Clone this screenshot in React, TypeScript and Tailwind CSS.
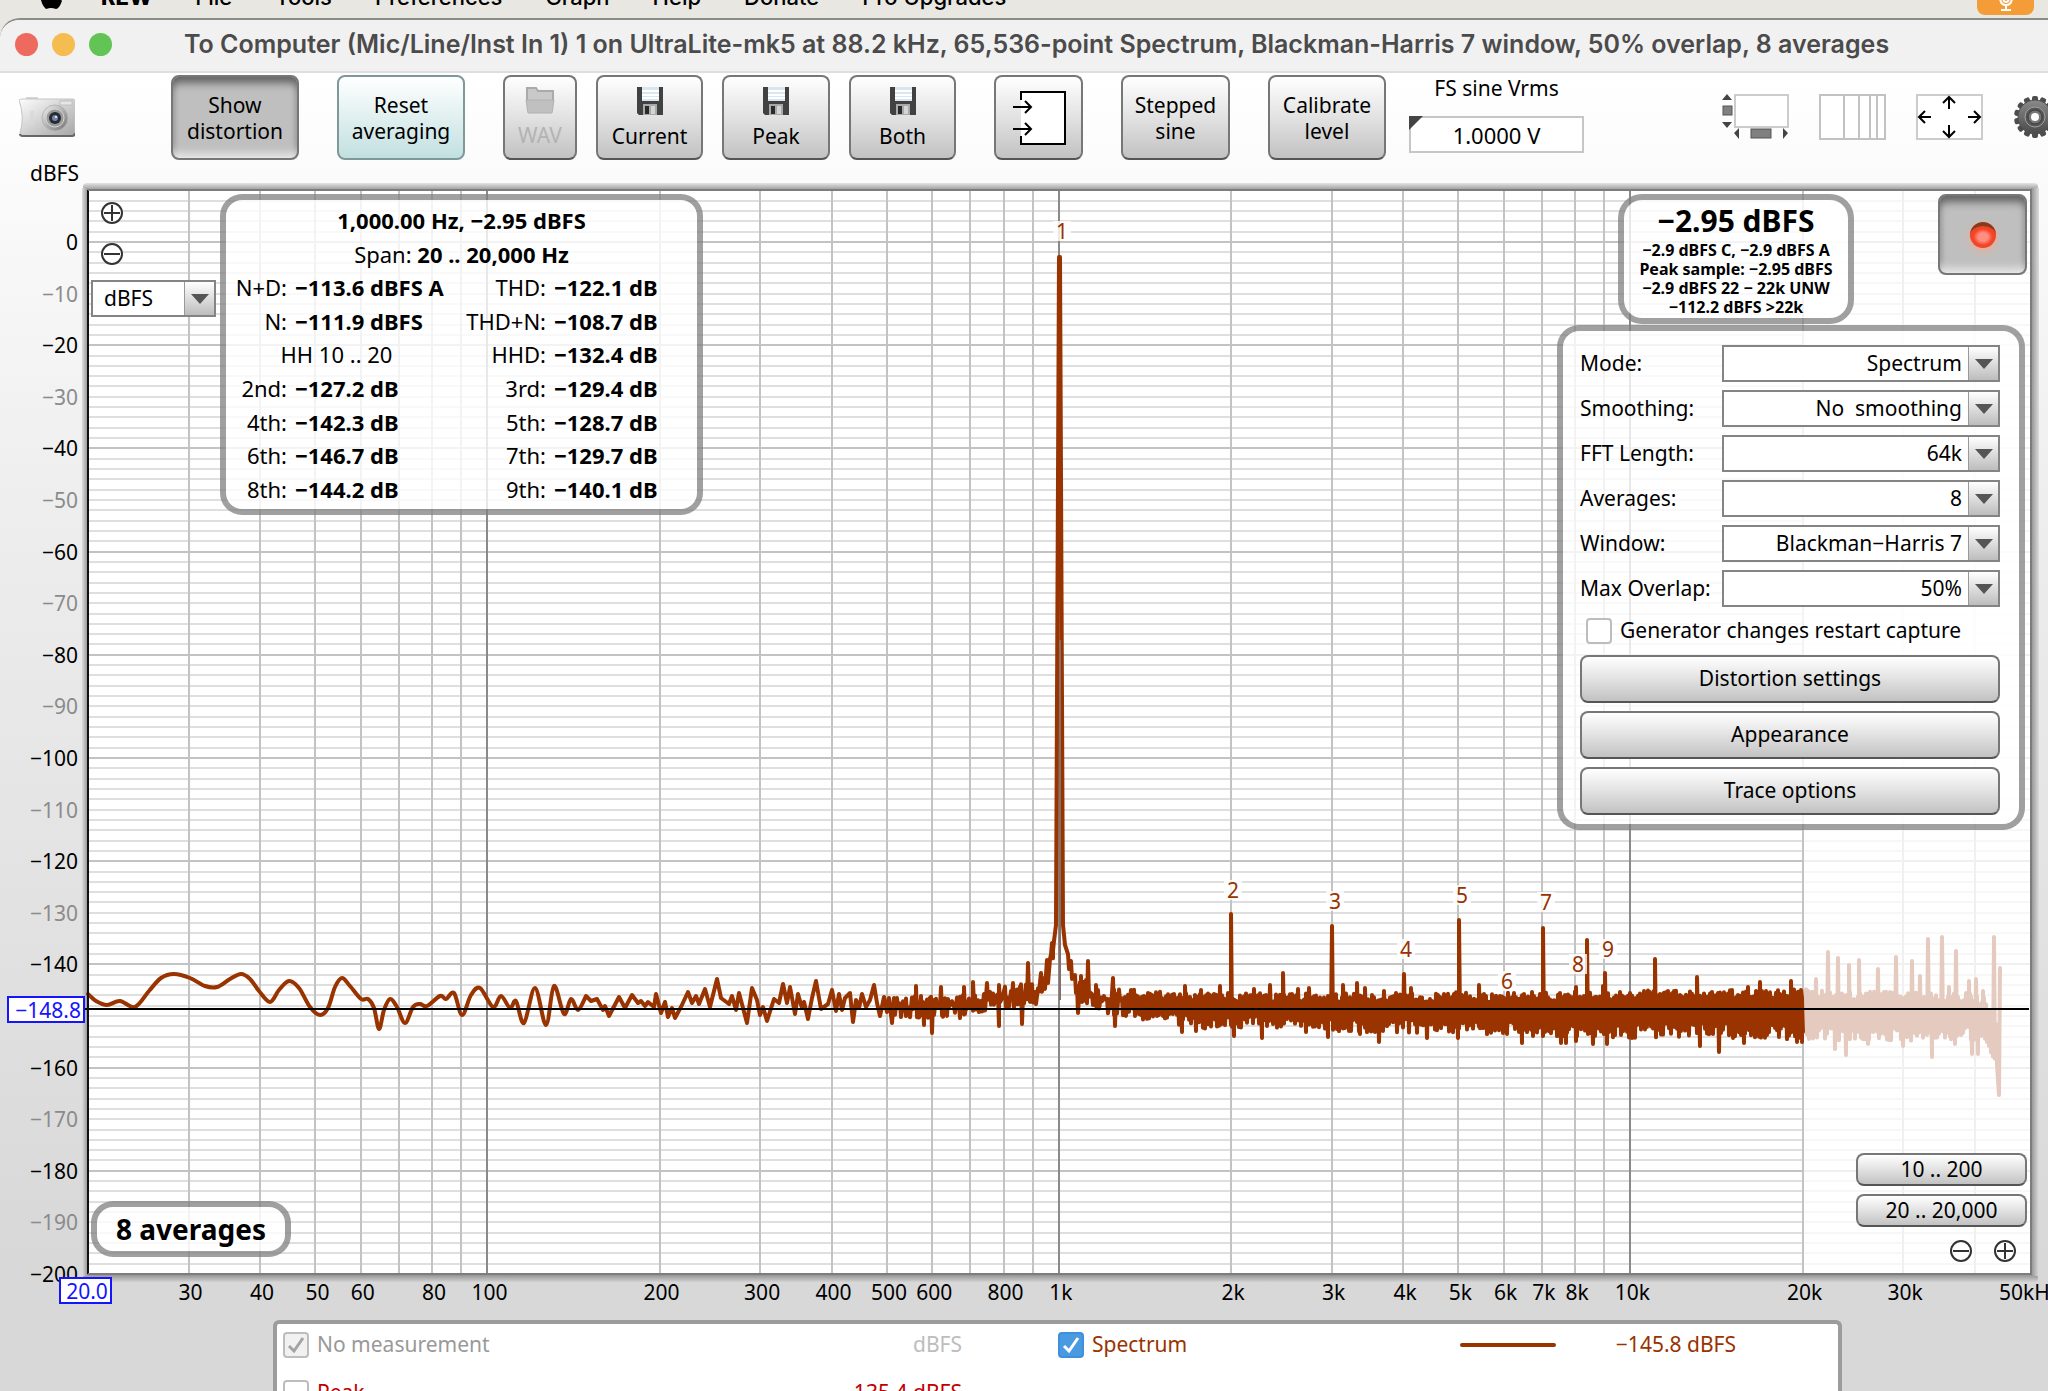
import React from "react";

const TRACE = "#993300";

/* Plot area geometry, in chart units */
const LEFT = 88;
const RIGHT = 2031;
const TOP = 190;
const BOTTOM = 1274;
const xOf = (hz: number) => LEFT + 571.5 * Math.log10(hz / 20);
const yOf = (db: number) => 242 - db * 5.16;

const FREQS = [30, 40, 50, 60, 70, 80, 90].concat(
  [100, 200, 300, 400, 500, 600, 700, 800, 900],
  [1000, 2000, 3000, 4000, 5000, 6000, 7000, 8000, 9000],
  [10000, 20000, 30000, 40000],
);

const X_LABELS: [number, string][] = [
  [30, "30"], [40, "40"], [50, "50"], [60, "60"], [80, "80"], [100, "100"], [200, "200"], [300, "300"],
  [400, "400"], [500, "500"], [600, "600"], [800, "800"], [1000, "1k"], [2000, "2k"], [3000, "3k"],
  [4000, "4k"], [5000, "5k"], [6000, "6k"], [7000, "7k"], [8000, "8k"], [10000, "10k"], [20000, "20k"], [30000, "30k"],
];

const HARMONICS: [number, number, string][] = [
  [1062, 231, "1"], [1233, 890, "2"], [1335, 901, "3"], [1406, 949, "4"], [1462, 895, "5"],
  [1507, 981, "6"], [1546, 902, "7"], [1578, 964, "8"], [1608, 949, "9"],
];

/* Low-frequency part of the trace */
const SMOOTH: number[][] = [
  [88, 994], [96, 1001], [107, 1005], [120, 1001], [135, 1007], [149, 991], [161, 978], [174, 974], [190, 978],
  [205, 986], [217, 987], [230, 979], [241, 974], [250, 979], [259, 991], [270, 1002], [279, 990], [289, 981],
  [299, 988], [310, 1007], [320, 1015], [328, 1008], [335, 987], [342, 978], [350, 986], [361, 999], [368, 999],
  [374, 1008], [379, 1029], [384, 1010], [390, 999], [397, 1007], [405, 1023], [413, 1007], [420, 1004],
  [427, 1006], [440, 996], [446, 999], [454, 993], [462, 1015], [471, 995], [480, 988], [493, 1007], [501, 996],
  [510, 1008], [516, 1001], [524, 1023], [535, 988], [546, 1025], [554, 986], [564, 1014], [571, 999], [578, 1010],
  [586, 996],
];
const ROUGH: number[][] = [
  [591, 1001], [597, 999], [603, 1010], [605, 1006], [609, 1016], [619, 997], [625, 1008], [632, 995], [638, 1003],
  [641, 1001], [645, 1006], [648, 1002], [654, 1007], [656, 994], [661, 1013], [665, 1002], [668, 1017], [672, 1008],
  [675, 1018], [681, 1007], [688, 992], [692, 1003], [696, 996], [699, 1004], [705, 989], [710, 1007], [717, 979],
  [721, 998], [729, 1004], [732, 996], [736, 1010], [739, 993], [743, 1008], [747, 1023], [752, 988], [757, 1000],
  [760, 1015], [763, 1007], [767, 1021], [774, 999], [779, 1003], [783, 984], [787, 1003], [790, 987], [795, 1014],
  [798, 994], [802, 1008], [804, 1002], [808, 1019], [812, 998], [816, 981], [821, 1009], [828, 1004], [832, 990],
  [836, 1011], [839, 994], [842, 1010], [845, 998], [850, 993], [853, 1022], [856, 1000], [859, 1008], [862, 994],
  [866, 1007], [870, 1000], [874, 985], [877, 1003], [880, 1016], [884, 997], [887, 1012], [889, 998], [892, 1023],
];

/* Envelope of the noise floor: x, upper edge, lower edge */
const ENVELOPE: number[][] = [
  [892, 998, 1017], [930, 994, 1018], [960, 993, 1015], [985, 989, 1011], [1018, 985, 1008], [1036, 980, 1004],
  [1046, 976, 1002], [1050, 955, 966], [1054, 945, 952], [1064, 946, 958], [1070, 958, 975], [1076, 974, 1000],
  [1090, 980, 1006], [1102, 988, 1013], [1130, 989, 1018], [1165, 992, 1024], [1200, 993, 1029], [1260, 993, 1027],
  [1330, 993, 1031], [1380, 993, 1033], [1450, 992, 1033], [1550, 992, 1037], [1600, 991, 1039], [1700, 990, 1037],
  [1803, 989, 1040], [1900, 992, 1041], [1975, 993, 1040], [1984, 997, 1044], [1990, 1006, 1056], [1998, 1030, 1068],
];
const UP: number[][] = [
  [916, 986], [941, 987], [964, 987], [973, 982], [987, 983], [999, 985], [1013, 983], [1028, 963], [1041, 973],
  [1047, 960], [1052, 943], [1071, 961], [1075, 975], [1081, 976], [1088, 961], [1096, 985], [1113, 978],
  [1131, 990], [1185, 986], [1201, 990], [1220, 986], [1231, 914], [1254, 989], [1270, 985], [1283, 973],
  [1298, 989], [1309, 988], [1332, 926], [1343, 985], [1357, 983], [1365, 988], [1384, 991], [1404, 974],
  [1411, 988], [1459, 920], [1479, 985], [1543, 928], [1576, 987], [1587, 940], [1605, 973], [1603, 986],
  [1655, 959], [1697, 977], [1748, 987], [1760, 982], [1791, 981], [1801, 990], [1816, 979], [1828, 952],
  [1838, 958], [1849, 965], [1859, 960], [1878, 969], [1896, 957], [1912, 961], [1920, 976], [1928, 939],
  [1942, 937], [1949, 987], [1956, 951], [1969, 981], [1976, 979], [1983, 991], [1994, 937],
];
const DOWN: number[][] = [
  [905, 1016], [923, 1025], [931, 1033], [946, 1016], [959, 1018], [998, 1026], [1021, 1024], [1077, 1013],
  [1114, 1026], [1181, 1032], [1195, 1031], [1233, 1036], [1261, 1038], [1305, 1032], [1327, 1037], [1359, 1034],
  [1378, 1042], [1426, 1038], [1457, 1038], [1521, 1043], [1560, 1043], [1565, 1043], [1575, 1041], [1592, 1044],
  [1606, 1044], [1631, 1038], [1699, 1046], [1718, 1052], [1743, 1043], [1796, 1042], [1801, 1042], [1834, 1049],
  [1845, 1055], [1867, 1044], [1902, 1046], [1931, 1057], [1954, 1044], [1971, 1054], [1977, 1054],
];

function envelopeAt(x: number) {
  let i = 0;
  while (i < ENVELOPE.length - 2 && ENVELOPE[i + 1][0] < x) i++;
  const [x0, a0, b0] = ENVELOPE[i];
  const [x1, a1, b1] = ENVELOPE[i + 1];
  const t = (x - x0) / (x1 - x0);
  return [a0 + (a1 - a0) * t, b0 + (b1 - b0) * t];
}

function noise(from: number, to: number) {
  let seed = 7 + from;
  const rnd = () => {
    seed = (seed * 16807) % 2147483647;
    return seed / 2147483647;
  };
  const up = new Map(UP.map(([x, y]) => [x, y]));
  const down = new Map(DOWN.map(([x, y]) => [x, y]));
  let d = "";
  for (let x = from; x <= to; x++) {
    const dense = x > 1130;
    const spike = up.get(x);
    const dip = down.get(x);
    const [a, b] = envelopeAt(x);
    if (spike === undefined && dip === undefined && (dense ? x % 2 : x % 3)) continue;
    const r = rnd();
    const s = rnd();
    const hi = spike ?? a + (dense ? 10 * r : 13 * r);
    const lo = dip ?? b - (dense ? 15 * s : 16 * s * s);
    d += `L${x} ${hi.toFixed(1)}L${x + 1} ${lo.toFixed(1)}`;
  }
  return d;
}

function smooth(points: number[][]) {
  let d = `M${points[0][0]} ${points[0][1]}`;
  for (let i = 0; i < points.length - 1; i++) {
    const p0 = points[Math.max(0, i - 1)];
    const p1 = points[i];
    const p2 = points[i + 1];
    const p3 = points[Math.min(points.length - 1, i + 2)];
    d += `C${p1[0] + (p2[0] - p0[0]) / 6} ${p1[1] + (p2[1] - p0[1]) / 6} ${p2[0] - (p3[0] - p1[0]) / 6} ${p2[1] - (p3[1] - p1[1]) / 6} ${p2[0]} ${p2[1]}`;
  }
  return d;
}

const AUDIBLE =
  smooth(SMOOTH) +
  ROUGH.map(([x, y]) => `L${x} ${y}`).join("") +
  noise(893, 1054) +
  "L1056 925L1057 700L1059 257L1060 257L1062 700L1063 925L1065 945" +
  noise(1066, 1802);
const ULTRASONIC = "M1805 1000" + noise(1805, 1996) + "L1997 1065L1999 1095L2000 968";

function Chart() {
  const rows: number[] = [];
  for (let db = 8; db > -200; db -= 2) rows.push(db);
  const labels: number[] = [];
  for (let db = 0; db >= -200; db -= 10) labels.push(db);
  return (
    <svg viewBox="0 160 2048 1160" className="block w-full" fontSize="21" role="img" aria-label="Spectrum level against frequency">
      <defs>
        <linearGradient id="edgeTop" x1="0" y1="0" x2="0" y2="1">
          <stop offset="0" stopColor="#e4e4e4" />
          <stop offset="1" stopColor="#999" />
        </linearGradient>
        <linearGradient id="edgeBottom" x1="0" y1="0" x2="0" y2="1">
          <stop offset="0" stopColor="#8c8c8c" />
          <stop offset="1" stopColor="#d2d2d2" />
        </linearGradient>
        <linearGradient id="edgeRight" x1="0" y1="0" x2="1" y2="0">
          <stop offset="0" stopColor="#909090" />
          <stop offset="1" stopColor="#dcdcdc" />
        </linearGradient>
        <linearGradient id="edgeLeft" x1="0" y1="0" x2="1" y2="0">
          <stop offset="0" stopColor="#dcdcdc" />
          <stop offset="1" stopColor="#909090" />
        </linearGradient>
      </defs>
      <text x="79" y="181" textAnchor="end">dBFS</text>
      <rect x="83" y="183" width="1955" height="7" rx="4" fill="url(#edgeTop)" />
      <rect x="83" y="1274" width="1955" height="8" rx="4" fill="url(#edgeBottom)" />
      <rect x="82" y="188" width="6" height="1088" fill="url(#edgeLeft)" />
      <rect x="2031" y="188" width="8" height="1088" fill="url(#edgeRight)" />
      <rect x={LEFT} y={TOP} width={RIGHT - LEFT} height={BOTTOM - TOP} fill="#fff" />
      {rows.map((db) => (
        <rect key={db} x={LEFT} y={Math.round(yOf(db)) - 1} width={RIGHT - LEFT} height={2} fill={db % 20 === 0 ? "#c3c3c3" : "#dfdfdf"} />
      ))}
      {FREQS.map((hz) => (
        <rect key={hz} x={Math.round(xOf(hz)) - 1} y={TOP} width={2} height={BOTTOM - TOP} fill={[100, 1000, 10000].includes(hz) ? "#8a8a8a" : "#c3c3c3"} />
      ))}
      <g stroke={TRACE} strokeWidth="4" fill="none" strokeLinejoin="round" strokeLinecap="round">
        <path d={ULTRASONIC} />
        <rect x="1804" y={TOP} width={RIGHT - 1804} height={BOTTOM - TOP} fill="#fff" fillOpacity="0.75" stroke="none" />
        <path d={AUDIBLE} />
      </g>
      <path d="M1060 640V1000" stroke="#857068" strokeWidth="2" />
      <path d={`M84 1009H${RIGHT - 2}`} stroke="#000" strokeWidth="2" />
      <path d={`M${LEFT} ${TOP}V${BOTTOM}`} stroke="#111" strokeWidth="2" />
      <path d={`M${LEFT} ${TOP}H${RIGHT}V${BOTTOM}H${LEFT}`} stroke="#7d7d7d" strokeWidth="2" fill="none" />
      {HARMONICS.map(([x, y, n]) => (
        <g key={n}>
          <rect x={x - 9} y={y - 10} width="18" height="20" fill="#fff" fillOpacity="0.8" />
          <text x={x} y={y + 8} textAnchor="middle" fill={TRACE}>{n}</text>
        </g>
      ))}
      {labels.filter((db) => db !== -150).map((db) => (
        <text key={db} x="78" y={yOf(db) + 8} textAnchor="end" fill={db % 20 === 0 ? "#000" : "#8b8b8b"}>
          {db === 0 ? "0" : `−${-db}`}
        </text>
      ))}
      <rect x="8" y="997" width="76" height="25" fill="#fff" stroke="#1414ff" strokeWidth="2" />
      <text x="81" y="1018" textAnchor="end" fill="#1414ff">−148.8</text>
      {X_LABELS.map(([hz, text]) => (
        <text key={text} x={xOf(hz) + 2} y="1300" textAnchor="middle">{text}</text>
      ))}
      <text x="1999" y="1300">50kHz</text>
      <rect x="60" y="1278" width="51" height="25" fill="#fff" stroke="#1414ff" strokeWidth="2" />
      <text x="87" y="1299" textAnchor="middle" fill="#1414ff">20.0</text>
    </svg>
  );
}

const GLOSS =
  "rounded-lg border-2 border-[#777] border-b-[#555] bg-linear-to-b from-white via-[#e2e2e2] to-[#c2c2c2] flex items-center justify-center";

function ToolButton({ className, children }: { className: string; children: React.ReactNode }) {
  return <button type="button" className={`${GLOSS} h-[85px] shrink-0 flex-col text-center leading-[26px] ${className}`}>{children}</button>;
}

function Floppy() {
  return (
    <svg width="26" height="28" viewBox="0 0 26 28" className="mb-2">
      <path d="M0 0H26V28H2L0 26Z" fill="#414141" />
      <rect x="5" y="0" width="17" height="14" fill="#d8e6f0" />
      <path d="M5 4H22M5 8H22M5 11H22" stroke="#fff" strokeWidth="2" />
      <rect x="6" y="17" width="14" height="11" fill="#a9a9a9" />
      <rect x="8" y="19" width="4" height="8" fill="#2b2b2b" />
      <rect x="14" y="19" width="4" height="8" fill="#d4d4d4" />
    </svg>
  );
}

function Folder() {
  return (
    <svg width="30" height="27" viewBox="0 0 30 27" className="mb-2">
      <path d="M2 14V1H11L13 4H28V14" fill="#c9c9c9" stroke="#aaa" strokeWidth="2" />
      <path d="M1 13H29L27 26H3Z" fill="#c0c0c0" stroke="#b0b0b0" />
    </svg>
  );
}

function Camera() {
  return (
    <svg width="56" height="40" viewBox="0 0 56 40">
      <defs>
        <linearGradient id="cam" x1="0" y1="0" x2="1" y2="1">
          <stop offset="0" stopColor="#fdfdfd" />
          <stop offset="1" stopColor="#a5a5a5" />
        </linearGradient>
        <linearGradient id="lens" x1="0" y1="0" x2="1" y2="1">
          <stop offset="0" stopColor="#f2f2f2" />
          <stop offset="1" stopColor="#6f6f6f" />
        </linearGradient>
      </defs>
      <rect x="7" y="0" width="12" height="4" fill="#d5d5d5" />
      <path d="M0 3Q1 2 4 2H54Q56 2 56 5V37Q56 39 53 39H3Q1 39 1 36Q6 20 0 3Z" fill="url(#cam)" stroke="#c4c4c4" />
      <path d="M1 37Q1 39 4 39H53Q56 39 56 36" stroke="#666" strokeWidth="2" fill="none" />
      <rect x="41" y="4" width="12" height="4" fill="#e6e6e6" stroke="#c0c0c0" />
      <path d="M13 14V28" stroke="#d8d8d8" strokeWidth="3" />
      <circle cx="36" cy="21" r="13" fill="url(#lens)" stroke="#b5b5b5" />
      <circle cx="36" cy="21" r="9" fill="#999" stroke="#d6d6d6" />
      <circle cx="36" cy="21" r="6" fill="#252a33" />
      <circle cx="36" cy="21" r="3" fill="#6f86a8" />
      <circle cx="37" cy="20" r="1" fill="#fff" />
    </svg>
  );
}

function Gear() {
  const teeth = Array.from({ length: 14 }, (_, i) => (i * 360) / 14);
  return (
    <svg width="44" height="44" viewBox="-22 -22 44 44">
      <defs>
        <linearGradient id="gear" x1="0" y1="0" x2="0" y2="1">
          <stop offset="0" stopColor="#8a8a8a" />
          <stop offset="1" stopColor="#4a4a4a" />
        </linearGradient>
      </defs>
      {teeth.map((a) => (
        <rect key={a} x="-3" y="-21" width="6" height="8" rx="2" fill="#4d4d4d" transform={`rotate(${a})`} />
      ))}
      <circle r="17" fill="url(#gear)" stroke="#4d4d4d" />
      <circle r="10" fill="#555" stroke="#a0a0a0" />
      <circle r="7" fill="#777" stroke="#3c3c3c" />
      <circle r="4" fill="#fff" />
    </svg>
  );
}

function ZoomButton({ plus, label }: { plus?: boolean; label: string }) {
  return (
    <button type="button" aria-label={label} className="block">
      <svg width="24" height="24" viewBox="0 0 24 24" fill="none" stroke="#333" strokeWidth="2">
        <circle cx="12" cy="12" r="10" fill="#fff" />
        <path d={plus ? "M4 12H20M12 4V20" : "M4 12H20"} />
      </svg>
    </button>
  );
}

function Drop({ id, value, right }: { id: string; value: string; right?: boolean }) {
  return (
    <div className="flex h-[37px] min-w-0 grow border-2 border-[#848484] bg-white">
      <select
        id={id}
        aria-label={right ? undefined : "Level unit"}
        className={`min-w-0 grow appearance-none bg-transparent outline-none ${right ? "pr-[6px] [text-align-last:right]" : "pl-[11px]"}`}
      >
        <option>{value}</option>
      </select>
      <span className="pointer-events-none flex w-[30px] shrink-0 items-center justify-center border-l border-[#999] bg-linear-to-b from-white to-[#bdbdbd]">
        <svg width="18" height="10" viewBox="0 0 18 10"><path d="M0 0H18L9 10Z" fill="#555" /></svg>
      </span>
    </div>
  );
}

const PANEL = "absolute border-[6px] border-[#808080]/75 bg-white/80 bg-clip-padding";
const PRESSED =
  "rounded-lg border-2 border-[#777] bg-[#bfbfbf] shadow-[inset_0_10px_8px_-4px_#666,inset_0_-8px_8px_-4px_#f5f5f5,inset_0_0_6px_#777] flex items-center justify-center";

const DISTORTION: string[][] = [
  ["N+D:", "−113.6 dBFS A", "THD:", "−122.1 dB"],
  ["N:", "−111.9 dBFS", "THD+N:", "−108.7 dB"],
  ["", "HH 10 .. 20", "HHD:", "−132.4 dB"],
  ["2nd:", "−127.2 dB", "3rd:", "−129.4 dB"],
  ["4th:", "−142.3 dB", "5th:", "−128.7 dB"],
  ["6th:", "−146.7 dB", "7th:", "−129.7 dB"],
  ["8th:", "−144.2 dB", "9th:", "−140.1 dB"],
];

function DistortionPanel() {
  return (
    <section className={`${PANEL} top-[34px] left-[220px] h-[321px] w-[483px] rounded-[22px] text-[22px] leading-[33px]`}>
      <p className="pt-1 text-center font-bold">1,000.00 Hz, −2.95 dBFS</p>
      <p className="pt-px text-center">Span: <b>20 .. 20,000 Hz</b></p>
      <table className="h-[235px] w-[440px] table-fixed border-collapse whitespace-nowrap">
        <colgroup>
          <col className="w-[61px]" /><col className="w-[152px]" /><col className="w-[107px]" /><col />
        </colgroup>
        <tbody>
          {DISTORTION.map(([a, b, c, d]) => (
            <tr key={c}>
              {a ? (
                <>
                  <th className="p-0 text-right font-normal">{a}</th>
                  <td className="p-0 pl-2 font-bold">{b}</td>
                </>
              ) : (
                <th colSpan={2} className="p-0 pl-2 text-center font-normal">{b}</th>
              )}
              <th className="p-0 text-right font-normal">{c}</th>
              <td className="p-0 pl-2 font-bold">{d}</td>
            </tr>
          ))}
        </tbody>
      </table>
    </section>
  );
}

const SETTINGS: [string, string, string][] = [
  ["mode", "Mode:", "Spectrum"],
  ["smoothing", "Smoothing:", "No\u00a0\u00a0smoothing"],
  ["fft", "FFT Length:", "64k"],
  ["averages", "Averages:", "8"],
  ["window", "Window:", "Blackman−Harris 7"],
  ["overlap", "Max Overlap:", "50%"],
];

function SettingsPanel() {
  return (
    <section className={`${PANEL} top-[165px] right-[23px] w-[468px] rounded-[22px] pt-[14px] pr-[19px] pb-[9px] pl-[17px]`}>
      <div className="flex flex-col gap-2">
        {SETTINGS.map(([id, label, value]) => (
          <div key={id} className="flex items-center">
            <label htmlFor={id} className="w-[142px] shrink-0 whitespace-nowrap">{label}</label>
            <Drop id={id} value={value} right />
          </div>
        ))}
      </div>
      <label className="my-[7px] flex h-[34px] items-center gap-2 pl-[6px] whitespace-nowrap">
        <input type="checkbox" className="h-[26px] w-[26px] shrink-0 appearance-none rounded-[4px] border-2 border-[#bdbdbd] bg-white" />
        Generator changes restart capture
      </label>
      <div className="flex flex-col gap-2">
        {["Distortion settings", "Appearance", "Trace options"].map((t) => (
          <button key={t} type="button" className={`${GLOSS} h-[48px] w-full`}>{t}</button>
        ))}
      </div>
    </section>
  );
}

function Check({ state, label }: { state: "off" | "on" | "disabled"; label: string }) {
  const look = state === "on" ? "border-[#3f8fdb] bg-[#4a9ae2]" : state === "disabled" ? "border-[#bdbdbd] bg-[#f1f1f1]" : "border-[#bdbdbd] bg-white";
  return (
    <label className="flex items-center gap-2 whitespace-nowrap">
      <span className="relative block h-[26px] w-[26px]">
        <input type="checkbox" defaultChecked={state !== "off"} disabled={state === "disabled"} className={`block h-[26px] w-[26px] appearance-none rounded-[4px] border-2 ${look}`} />
        {state !== "off" && (
          <svg viewBox="0 0 26 26" className="pointer-events-none absolute inset-0" fill="none" stroke={state === "on" ? "#fff" : "#a3a3a3"} strokeWidth="3">
            <path d="M6 14L11 19L20 6" />
          </svg>
        )}
      </span>
      {label}
    </label>
  );
}

export default function App() {
  return (
    <div className="flex h-screen flex-col overflow-hidden bg-[#e9e7e2] font-['Noto_Sans',sans-serif] text-[21px] text-black">
      <nav className="flex h-[18px] shrink-0 items-end overflow-hidden pb-[8px] pl-[38px] font-['Inter',sans-serif] text-[22px] leading-[26px] font-medium whitespace-nowrap">
        <svg width="26" height="26" viewBox="0 0 26 26" className="mr-[37px] shrink-0">
          <path d="M2 10Q2 4 8 4Q11 4 13 5Q16 4 18 4Q22 4 24 7Q19 11 24 17Q21 25 18 25Q15 24 13 24Q11 24 8 25Q3 21 2 10Z" />
        </svg>
        <div className="flex gap-[43px]">
          <a href="#rew" className="font-extrabold">REW</a>
          <a href="#file">File</a>
          <a href="#tools">Tools</a>
          <a href="#preferences">Preferences</a>
          <a href="#graph">Graph</a>
          <a href="#help">Help</a>
          <a href="#donate">Donate</a>
          <a href="#pro">Pro Upgrades</a>
        </div>
        <div className="mr-[14px] -mb-[5px] ml-auto flex h-[30px] w-[57px] shrink-0 items-end justify-center rounded-lg bg-[#f39c38] pb-1">
          <svg width="16" height="18" viewBox="0 0 16 18" fill="none" stroke="#fff" strokeWidth="2"><path d="M2 4Q2 12 8 12T14 4M8 12V17M3 17H13M5 4Q5 9 8 9T11 4" /></svg>
        </div>
      </nav>
      <main className="flex min-h-0 grow flex-col rounded-tl-[20px] border-t-2 border-[#8b8b89] bg-linear-to-b from-white from-4% via-[#eee] via-35% to-[#d8d8d8] to-90%">
        <header className="flex h-[53px] shrink-0 items-center rounded-tl-[20px] border-b-2 border-[#dedede] bg-[#f1f1f1] pb-[2px] pl-[15px]">
          <div className="flex gap-[14px]">
            <button type="button" aria-label="Close" className="h-[23px] w-[23px] rounded-full bg-[#ee6a5f]" />
            <button type="button" aria-label="Minimise" className="h-[23px] w-[23px] rounded-full bg-[#f5bd4f]" />
            <button type="button" aria-label="Zoom" className="h-[23px] w-[23px] rounded-full bg-[#61c454]" />
          </div>
          <h1 className="ml-[72px] font-['Inter',sans-serif] text-[25px] font-semibold whitespace-nowrap text-[#4b4b4b]">
            To Computer (Mic/Line/Inst In 1) 1 on UltraLite-mk5 at 88.2 kHz, 65,536-point Spectrum, Blackman-Harris 7 window, 50% overlap, 8 averages
          </h1>
        </header>
        <div className="flex h-[87px] shrink-0 items-start overflow-hidden pt-[2px]">
          <button type="button" aria-label="Capture image" className="mt-[22px] mr-[96px] ml-[19px]"><Camera /></button>
          <button type="button" aria-pressed="true" className={`${PRESSED} mr-[38px] h-[85px] w-[128px] shrink-0 flex-col text-center leading-[26px]`}>
            Show<br />distortion
          </button>
          <button type="button" className="mr-[38px] flex h-[85px] w-[128px] shrink-0 flex-col items-center justify-center rounded-lg border-2 border-[#7f9898] bg-linear-to-b from-white to-[#c2e0e0] text-center leading-[26px]">
            Reset<br />averaging
          </button>
          <ToolButton className="mr-[19px] w-[74px] text-[#b3b3b3]"><Folder />WAV</ToolButton>
          <ToolButton className="mr-[19px] w-[107px]"><Floppy />Current</ToolButton>
          <ToolButton className="mr-[19px] w-[108px]"><Floppy />Peak</ToolButton>
          <ToolButton className="mr-[38px] w-[107px]"><Floppy />Both</ToolButton>
          <ToolButton className="mr-[38px] w-[89px]">
            <svg width="56" height="56" viewBox="0 0 56 56" fill="none" stroke="#000" strokeWidth="2">
              <path d="M10 2H54V54H10Z" fill="#fff" stroke="none" />
              <path d="M10 10V2H54V54H10V46M2 17H20M14 11L20 17L14 23M2 39H20M14 33L20 39L14 45" />
            </svg>
          </ToolButton>
          <ToolButton className="mr-[38px] w-[109px]">Stepped<br />sine</ToolButton>
          <ToolButton className="mr-[23px] w-[118px]">Calibrate<br />level</ToolButton>
          <div className="relative flex w-[175px] shrink-0 flex-col items-center">
            <label htmlFor="vrms" className="leading-[26px]">FS sine Vrms</label>
            <input id="vrms" defaultValue="1.0000 V" className="mt-[15px] h-[37px] w-full border-2 border-[#c6c6c6] bg-white text-center text-[22px]" />
            <svg width="14" height="14" className="absolute top-[41px] left-0"><path d="M0 0H14L0 14Z" fill="#444" /></svg>
          </div>
          <div className="mt-[19px] ml-auto flex shrink-0 gap-[30px]">
            <button type="button" aria-label="Scrollbars">
              <svg width="67" height="46" viewBox="0 0 67 46">
                <rect x="13" y="1" width="53" height="32" fill="#fff" stroke="#ccc" strokeWidth="2" />
                <path d="M0 6L5 0L10 6ZM0 28L5 34L10 28ZM17 34V45L12 39ZM61 34V45L66 39Z" fill="#444" />
                <rect x="1" y="12" width="9" height="9" fill="#808080" stroke="#555" />
                <rect x="29" y="35" width="20" height="9" fill="#808080" stroke="#555" />
              </svg>
            </button>
            <button type="button" aria-label="Frequency axis">
              <svg width="67" height="46" viewBox="0 0 67 46" fill="none" stroke="#c2c2c2" strokeWidth="2">
                <path d="M1 1H66V45H1ZM25 1V45M40 1V45M51 1V45M58 1V45" fill="#fff" />
              </svg>
            </button>
            <button type="button" aria-label="Fit to data">
              <svg width="67" height="46" viewBox="0 0 67 46" fill="none" stroke="#000" strokeWidth="2">
                <rect x="1" y="1" width="65" height="44" fill="#fff" stroke="#ccc" />
                <path d="M33 15V3M27 9L33 3L39 9M33 31V43M27 37L33 43L39 37M15 23H3M9 17L3 23L9 29M52 23H64M58 17L64 23L58 29" />
              </svg>
            </button>
            <button type="button" aria-label="Graph settings" className="-mr-[9px]"><Gear /></button>
          </div>
        </div>

        <div className="relative shrink-0 overflow-hidden">
          <Chart />
          <div className="absolute top-[41px] left-[91px] flex w-[125px] flex-col">
            <div className="flex flex-col gap-[17px] pl-[9px]">
              <ZoomButton plus label="Zoom in level" />
              <ZoomButton label="Zoom out level" />
            </div>
            <div className="mt-[14px] flex"><Drop id="unit" value="dBFS" /></div>
          </div>
          <DistortionPanel />
          <section className={`${PANEL} top-[34px] right-[194px] h-[130px] w-[236px] rounded-[24px] text-center text-[16px] leading-[19px] font-bold whitespace-nowrap`}>
            <p className="pt-px text-[30px] leading-[40px]">−2.95 dBFS</p>
            <p>−2.9 dBFS C, −2.9 dBFS A</p>
            <p>Peak sample: −2.95 dBFS</p>
            <p>−2.9 dBFS 22 − 22k UNW</p>
            <p>−112.2 dBFS &gt;22k</p>
          </section>
          <button type="button" aria-label="Record" className={`${PRESSED} absolute top-[34px] right-[21px] h-[81px] w-[89px]`}>
            <span className="h-[26px] w-[26px] rounded-full border-t-4 border-[#8a3a1c] bg-radial from-[#ff8f80] from-25% via-[#f8462a] via-50% to-[#e0401c] shadow-[0_3px_6px_1px_#e6b09c]" />
          </button>
          <SettingsPanel />
          <p className={`${PANEL} bottom-[63px] left-[91px] flex h-[56px] w-[200px] items-center justify-center rounded-[22px] text-[28px] font-bold`}>8 averages</p>
          <div className="absolute right-[21px] bottom-[57px] flex w-[171px] flex-col gap-[8px]">
            <button type="button" className={`${GLOSS} h-[33px]`}>10 .. 200</button>
            <button type="button" className={`${GLOSS} h-[33px]`}>20 .. 20,000</button>
            <div className="mt-1 flex justify-end gap-[20px] pr-[10px]">
              <ZoomButton label="Zoom out frequency" />
              <ZoomButton plus label="Zoom in frequency" />
            </div>
          </div>
        </div>

        <section className="mr-[206px] ml-[273px] grow rounded-t-md border-4 border-b-0 border-[#9c9c9c] bg-white pt-[2px] pr-[102px] pl-[6px]">
          <div className="grid h-[38px] grid-cols-[679fr_774fr]">
            <div className="flex items-center justify-between text-[#999]">
              <Check state="disabled" label="No measurement" />
              <span className="text-[#bdbdbd]">dBFS</span>
            </div>
            <div className="flex items-center pl-[96px] text-[#993300]">
              <Check state="on" label="Spectrum" />
              <svg width="96" height="4" className="mr-[60px] ml-auto"><path d="M2 2H94" stroke={TRACE} strokeWidth="4" strokeLinecap="round" /></svg>
              <span>−145.8 dBFS</span>
            </div>
          </div>
          <div className="mt-[10px] grid h-[38px] grid-cols-[679fr_774fr]">
            <div className="flex items-center justify-between text-[#c00000]">
              <Check state="off" label="Peak" />
              <span>−135.4 dBFS</span>
            </div>
          </div>
        </section>
      </main>
    </div>
  );
}
